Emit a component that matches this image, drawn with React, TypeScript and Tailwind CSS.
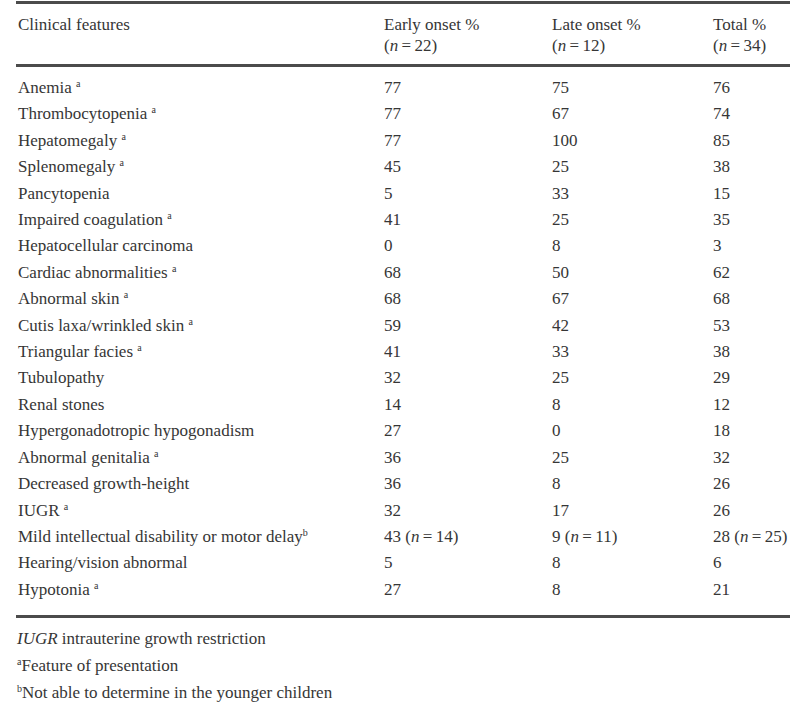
const rows: [string, string, string, string, string][] = [
  ["Anemia", "a", "77", "75", "76"],
  ["Thrombocytopenia", "a", "77", "67", "74"],
  ["Hepatomegaly", "a", "77", "100", "85"],
  ["Splenomegaly", "a", "45", "25", "38"],
  ["Pancytopenia", "", "5", "33", "15"],
  ["Impaired coagulation", "a", "41", "25", "35"],
  ["Hepatocellular carcinoma", "", "0", "8", "3"],
  ["Cardiac abnormalities", "a", "68", "50", "62"],
  ["Abnormal skin", "a", "68", "67", "68"],
  ["Cutis laxa/wrinkled skin", "a", "59", "42", "53"],
  ["Triangular facies", "a", "41", "33", "38"],
  ["Tubulopathy", "", "32", "25", "29"],
  ["Renal stones", "", "14", "8", "12"],
  ["Hypergonadotropic hypogonadism", "", "27", "0", "18"],
  ["Abnormal genitalia", "a", "36", "25", "32"],
  ["Decreased growth-height", "", "36", "8", "26"],
  ["IUGR", "a", "32", "17", "26"],
  ["Mild intellectual disability or motor delay", "b", "43|14", "9|11", "28|25"],
  ["Hearing/vision abnormal", "", "5", "8", "6"],
  ["Hypotonia", "a", "27", "8", "21"],
];

function Val({ v }: { v: string }) {
  const [num, n] = v.split("|");
  if (!n) return <>{num}</>;
  return (
    <>
      {num} (<i>n</i>
      {"\u2009=\u2009"}
      {n})
    </>
  );
}

// footnote marker, raised small letter
function Mark({ c }: { c: string }) {
  return <sup className="text-[10px] -top-[6px]">{c}</sup>;
}

export default function App() {
  return (
    <div
      className="w-[800px] h-[711px] bg-white text-[#363636] text-[17px]"
      style={{ fontFamily: '"Liberation Serif", "Times New Roman", serif' }}
    >
      <div className="ml-[16px] w-[774px] pt-[1px]">
        {/* Header */}
        <div className="border-t-[3px] border-b-[3px] border-[#4b4b4b] pt-[10px] pb-[8px]">
          <div className="grid grid-cols-[366px_168px_161px_1fr] pl-[2px] leading-[21px]">
            <div>Clinical features</div>
            <div>
              Early onset %<br />(<i>n</i>
              {"\u2009=\u2009"}22)
            </div>
            <div>
              Late onset %<br />(<i>n</i>
              {"\u2009=\u2009"}12)
            </div>
            <div>
              Total %<br />(<i>n</i>
              {"\u2009=\u2009"}34)
            </div>
          </div>
        </div>

        {/* Body */}
        <div className="border-b-[3px] border-[#4b4b4b] pt-[8px] pb-[12px]">
          {rows.map(([label, mark, early, late, total]) => (
            <div
              key={label}
              className="grid grid-cols-[366px_168px_161px_1fr] pl-[2px] leading-[26.4px] whitespace-nowrap"
            >
              <div>
                {label}
                {mark === "a" && (
                  <>
                    {" "}
                    <Mark c="a" />
                  </>
                )}
                {mark === "b" && <Mark c="b" />}
              </div>
              <div>
                <Val v={early} />
              </div>
              <div>
                <Val v={late} />
              </div>
              <div>
                <Val v={total} />
              </div>
            </div>
          ))}
        </div>

        {/* Footnotes */}
        <div className="pt-[7px] pl-[1px] leading-[27px]">
          <div>
            <i>IUGR</i> intrauterine growth restriction
          </div>
          <div>
            <Mark c="a" />
            Feature of presentation
          </div>
          <div>
            <Mark c="b" />
            Not able to determine in the younger children
          </div>
        </div>
      </div>
    </div>
  );
}
